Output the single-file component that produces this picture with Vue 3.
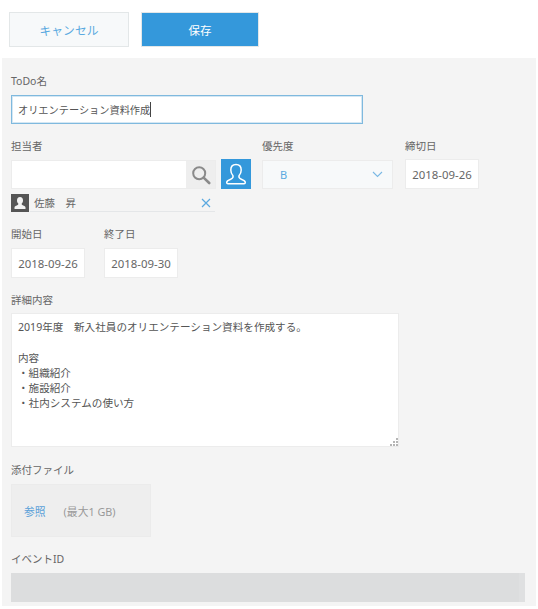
<script setup>
const detail = ['2019年度　新入社員のオリエンテーション資料を作成する。', '', '内容', '・組織紹介', '・施設紹介', '・社内システムの使い方']
</script>

<template>
  <div class="page">
    <header class="bar">
      <button class="btn cancel">キャンセル</button>
      <button class="btn save">保存</button>
    </header>
    <main class="panel">
      <section class="todo">
        <label class="lbl">ToDo名</label>
        <div class="title-input"><span>オリエンテーション資料作成</span><i class="caret"></i></div>
      </section>

      <section class="row assign-row">
        <div class="assignee">
          <label class="lbl">担当者</label>
          <div class="picker">
            <div class="search">
              <div class="search-field"></div>
              <div class="search-btn">
                <svg width="20" height="20" viewBox="0 0 20 20" fill="none" stroke="#8a8a8a" stroke-width="2">
                  <circle cx="8.2" cy="8.2" r="6"/>
                  <path d="M12.6 12.6l5.6 5.4" stroke-width="2.6" stroke-linecap="round"/>
                </svg>
              </div>
            </div>
            <div class="user-btn">
              <svg width="24" height="24" viewBox="0 0 24 24" fill="none" stroke="#fff" stroke-width="1.5" stroke-linejoin="round">
                <path d="M12 2.5c-3.4 0-5.2 2.4-5.2 5.6 0 2.4.9 4.3 2.2 5.6.4 1.600-.3 2.700-2.300 3.500-2.300.9-4 1.700-4 3.200 0 .8.500 1.300 1.300 1.300h16c.8 0 1.300-.5 1.300-1.300 0-1.500-1.700-2.300-4-3.200-2-.8-2.700-1.900-2.300-3.500 1.300-1.300 2.200-3.200 2.200-5.600 0-3.200-1.800-5.600-5.200-5.600z"/>
              </svg>
            </div>
          </div>
          <div class="chosen">
            <div class="avatar">
              <svg width="18" height="18" viewBox="0 0 18 18" fill="#f2f2f2">
                <path d="M9 3c-2 0-3 1.500-3 3.400 0 1.400.5 2.500 1.300 3.200.1 1-.3 1.500-1.400 2-1.200.5-2.400.9-2.400 1.900V15h11v-1.500c0-1-1.200-1.400-2.400-1.900-1.100-.5-1.500-1-1.400-2 .8-.7 1.300-1.800 1.300-3.200C12 4.500 11 3 9 3z"/>
              </svg>
            </div>
            <div class="chosen-name">
              <span>佐藤　昇</span>
              <svg width="12" height="12" viewBox="0 0 12 12" stroke="#5aa9e0" stroke-width="1.200" fill="none"><path d="M2 2l8 8M10 2l-8 8"/></svg>
            </div>
          </div>
        </div>
        <div class="priority">
          <label class="lbl">優先度</label>
          <div class="select">
            <span>B</span>
            <svg width="11" height="7" viewBox="0 0 11 7" fill="none" stroke="#7ab8e4" stroke-width="1.100"><path d="M1 1l4.500 4.500L10 1"/></svg>
          </div>
        </div>
        <div class="due">
          <label class="lbl">締切日</label>
          <div class="date">2018-09-26</div>
        </div>
      </section>

      <section class="row dates-row">
        <div>
          <label class="lbl">開始日</label>
          <div class="date">2018-09-26</div>
        </div>
        <div>
          <label class="lbl">終了日</label>
          <div class="date">2018-09-30</div>
        </div>
      </section>

      <section class="detail">
        <label class="lbl">詳細内容</label>
        <div class="textarea">
          <div v-for="(line, i) in detail" :key="i" class="line">{{ line }}</div>
          <svg class="grip" width="8" height="8" viewBox="0 0 8 8" fill="#b5b5b5">
            <rect x="6" y="0" width="2" height="2"/><rect x="3" y="3" width="2" height="2"/><rect x="6" y="3" width="2" height="2"/>
            <rect x="0" y="6" width="2" height="2"/><rect x="3" y="6" width="2" height="2"/><rect x="6" y="6" width="2" height="2"/>
          </svg>
        </div>
      </section>

      <section class="attach">
        <label class="lbl">添付ファイル</label>
        <div class="attach-box"><span class="browse">参照</span><span class="max">(最大1 GB)</span></div>
      </section>

      <section class="event">
        <label class="lbl">イベントID</label>
        <div class="event-box"></div>
      </section>
    </main>
  </div>
</template>

<style>
html, body { margin: 0; background: #fff; }
</style>

<style scoped>
.page {
  width: 538px;
  height: 609px;
  overflow: hidden;
  box-sizing: border-box;
  padding: 0 2px 3px;
  font-family: "Noto Sans", "Noto Sans CJK JP", sans-serif;
  font-size: 11px;
  color: #666;
  display: flex;
  flex-direction: column;
}
.bar {
  height: 58px;
  flex: none;
  box-sizing: border-box;
  padding: 12px 0 0 7px;
  display: flex;
  align-items: flex-start;
  gap: 12px;
}
.btn {
  height: 35px;
  box-sizing: border-box;
  font: inherit;
  font-size: 11.800px;
  padding: 0;
}
.cancel { width: 120px; background: #f7f9fa; border: 1px solid #e3e7e8; color: #5aa9e0; }
.save { width: 118px; background: #3498db; border: 1px solid #e3e7e8; color: #fff; font-size: 11.500px; }
.panel {
  flex: 1;
  background: #f4f4f4;
  box-sizing: border-box;
  padding: 16px 0 0 9px;
  display: flex;
  flex-direction: column;
}
.lbl { display: block; height: 15px; line-height: 15px; font-size: 10.500px; color: #666; }
.todo { height: 65px; }
.title-input {
  width: 352px;
  height: 29px;
  margin-top: 6px;
  box-sizing: border-box;
  border: 1px solid #7fb9de;
  box-shadow: inset 0 0 0 1px #d5e7f3;
  background: #fff;
  padding-left: 6px;
  display: flex;
  align-items: center;
  font-size: 10.200px;
  color: #555;
}
.caret { width: 1px; height: 15px; background: #444; }
.row { display: flex; align-items: flex-start; }
.assign-row { height: 88px; }
.assignee { width: 251px; }
.picker { display: flex; gap: 5px; margin-top: 5px; height: 30px; }
.search { display: flex; width: 205px; height: 29px; margin-top: 1px; box-sizing: border-box; border: 1px solid #ececec; }
.search-field { flex: 1; background: #fff; }
.search-btn { width: 29px; background: #eee; display: flex; align-items: center; justify-content: center; }
.user-btn { width: 30px; height: 30px; background: #3498db; display: flex; align-items: center; justify-content: center; }
.chosen { display: flex; margin-top: 5px; gap: 1px; width: 204px; }
.avatar { width: 18px; height: 18px; background: #555; flex: none; }
.chosen-name {
  flex: 1;
  height: 18px;
  box-sizing: border-box;
  border-bottom: 1px solid #e4e6e8;
  display: flex;
  align-items: center;
  justify-content: space-between;
  padding: 0 3px 0 4px;
  font-size: 10.500px;
  line-height: 16px;
}
.priority { width: 131px; }
.select {
  margin-top: 6px;
  height: 29px;
  box-sizing: border-box;
  background: #f7f9fa;
  border: 1px solid #ececec;
  padding: 0 9px 0 17px;
  display: flex;
  align-items: center;
  justify-content: space-between;
  color: #5aa9e0;
  font-size: 11px;
}
.due { margin-left: 12px; }
.due .date { margin-top: 5px; }
.date {
  width: 74px;
  height: 30px;
  margin-top: 6px;
  box-sizing: border-box;
  background: #fff;
  border: 1px solid #ececec;
  display: flex;
  align-items: center;
  justify-content: center;
  font-size: 11.400px;
  color: #666;
}
.dates-row { gap: 19px; height: 66px; }
.detail { height: 170px; }
.textarea {
  position: relative;
  width: 388px;
  height: 134px;
  margin-top: 5px;
  box-sizing: border-box;
  background: #fff;
  border: 1px solid #ececec;
  padding: 6px 6px;
  font-size: 10.600px;
  color: #555;
}
.line { height: 15.300px; line-height: 15.300px; }
.grip { position: absolute; right: 0; bottom: 0; }
.attach { height: 89px; }
.attach-box {
  width: 140px;
  height: 53px;
  margin-top: 6px;
  box-sizing: border-box;
  background: #eee;
  border: 1px solid #ebebeb;
  padding-left: 12px;
  display: flex;
  align-items: center;
  gap: 18px;
  font-size: 10.800px;
}
.browse { color: #5aa0d8; }
.max { color: #999; }
.event-box {
  width: 514px;
  height: 29px;
  margin-top: 6px;
  box-sizing: border-box;
  background: #dcddde;
  border-right: 6px solid #dfe0e1;
}
</style>
